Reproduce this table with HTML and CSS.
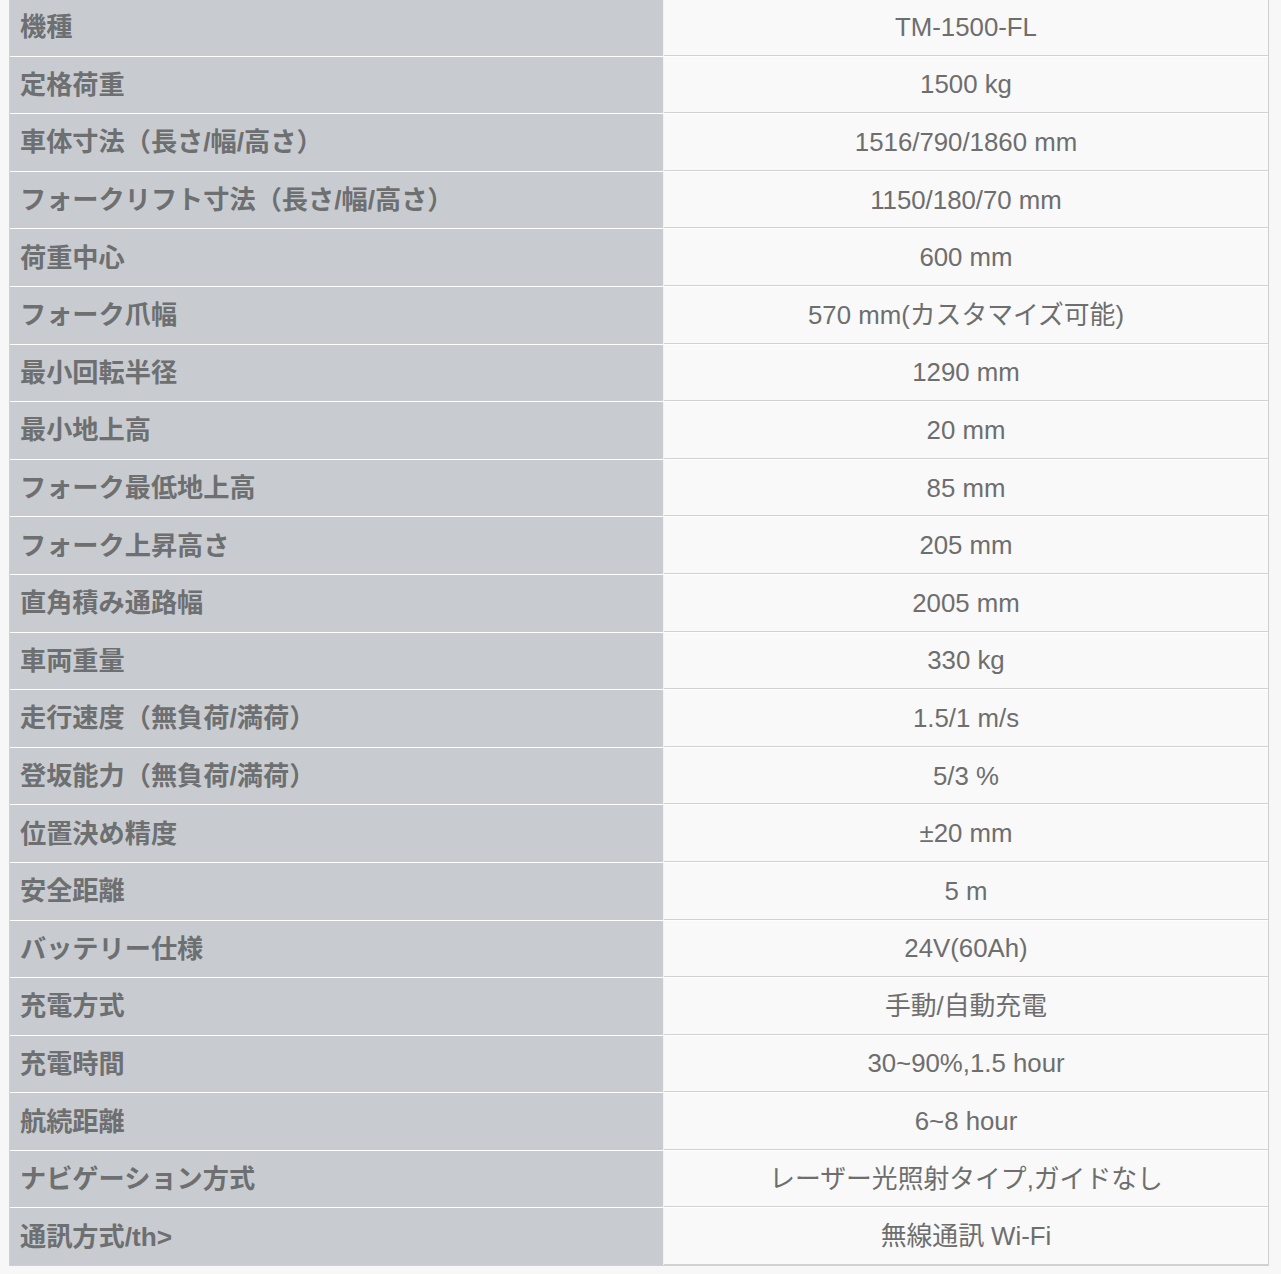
FILE: index.html
```html
<!DOCTYPE html>
<html lang="ja">
<head>
<meta charset="utf-8">
<title>仕様</title>
<link rel="stylesheet" href="styles.css">
</head>
<body>
<table class="spec">
<tbody>
<tr><th>機種</th><td>TM-1500-FL</td></tr>
<tr><th>定格荷重</th><td>1500 kg</td></tr>
<tr><th>車体寸法（長さ/幅/高さ）</th><td>1516/790/1860 mm</td></tr>
<tr><th>フォークリフト寸法（長さ/幅/高さ）</th><td>1150/180/70 mm</td></tr>
<tr><th>荷重中心</th><td>600 mm</td></tr>
<tr><th>フォーク爪幅</th><td>570 mm(カスタマイズ可能)</td></tr>
<tr><th>最小回転半径</th><td>1290 mm</td></tr>
<tr><th>最小地上高</th><td>20 mm</td></tr>
<tr><th>フォーク最低地上高</th><td>85 mm</td></tr>
<tr><th>フォーク上昇高さ</th><td>205 mm</td></tr>
<tr><th>直角積み通路幅</th><td>2005 mm</td></tr>
<tr><th>車両重量</th><td>330 kg</td></tr>
<tr><th>走行速度（無負荷/満荷）</th><td>1.5/1 m/s</td></tr>
<tr><th>登坂能力（無負荷/満荷）</th><td>5/3 %</td></tr>
<tr><th>位置決め精度</th><td>±20 mm</td></tr>
<tr><th>安全距離</th><td>5 m</td></tr>
<tr><th>バッテリー仕様</th><td>24V(60Ah)</td></tr>
<tr><th>充電方式</th><td>手動/自動充電</td></tr>
<tr><th>充電時間</th><td>30~90%,1.5 hour</td></tr>
<tr><th>航続距離</th><td>6~8 hour</td></tr>
<tr><th>ナビゲーション方式</th><td>レーザー光照射タイプ,ガイドなし</td></tr>
<tr><th>通訊方式/th&gt;</th><td>無線通訊 Wi-Fi</td></tr>
</tbody>
</table>
</body>
</html>
```
FILE: styles.css
```css
html, body {
  margin: 0;
  padding: 0;
  background: #f7f7f7;
}

body {
  font-family: "Liberation Sans", "Noto Sans CJK JP", sans-serif;
  color: #6e6e6e;
}

.spec {
  border-collapse: separate;
  border-spacing: 0;
  width: 1260px;
  margin: -3px 0 0 9px;
  border: 1px solid #cfcfcf;
}

.spec th,
.spec td {
  padding: 0 10px;
  box-sizing: border-box;
  border-top: 1px solid #ffffff;
  line-height: 30px;
}

.spec th {
  width: 654px;
  height: 55.6px;
  text-align: left;
  font-weight: bold;
  font-size: 26.2px;
  background: #c8ccd0;
  border-right: 1px solid #f2f2f2;
  color: #6e6f71;
}

.spec td {
  text-align: center;
  font-size: 25.8px;
  background: #f9f9f9;
  border-bottom: 1px solid #d2d2d2;
  height: 57.6px;
}
```
